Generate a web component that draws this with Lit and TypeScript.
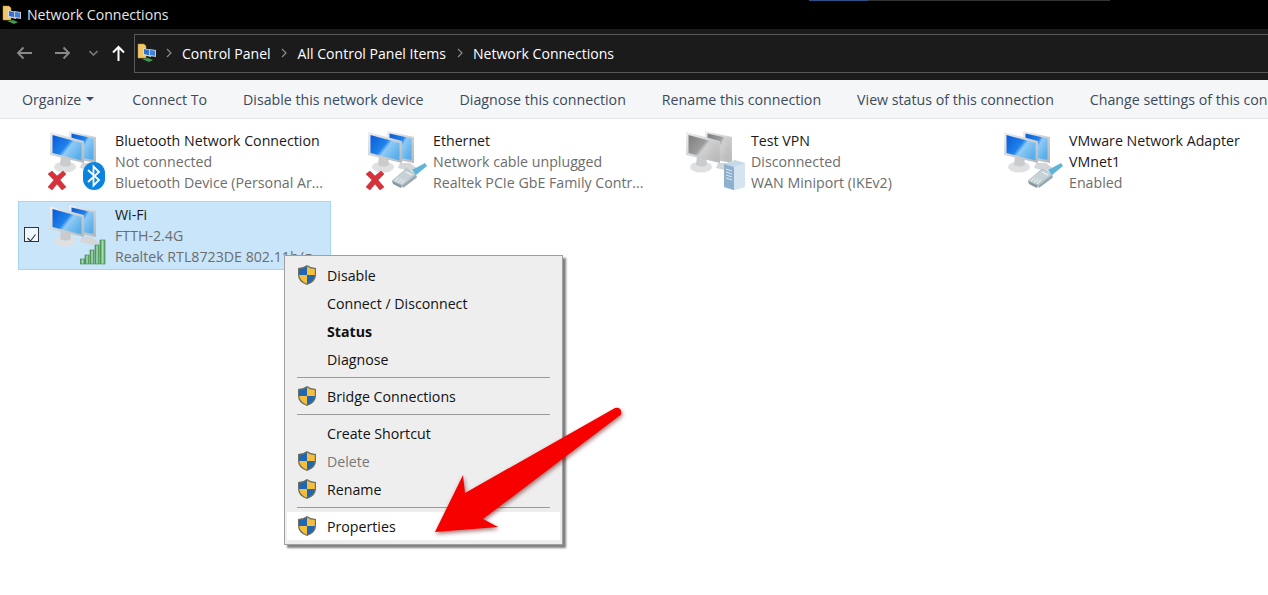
import { LitElement, html, css, svg } from "lit";
import { customElement } from "lit/decorators.js";

const monitors = (gray: boolean) => {
  const id = gray ? "g" : "b";
  return svg`
    <defs>
      <linearGradient id="scr-${id}" x1="0" y1="0" x2="1" y2=".7">
        <stop offset="0" stop-color="${gray ? "#7d7d7d" : "#0a5ad6"}"/>
        <stop offset=".5" stop-color="${gray ? "#9c9c9c" : "#1f82ea"}"/>
        <stop offset=".62" stop-color="${gray ? "#d0d0d0" : "#8fcaf4"}"/>
        <stop offset="1" stop-color="${gray ? "#bdbdbd" : "#5aaeea"}"/>
      </linearGradient>
      <linearGradient id="frm-${id}" x1="0" y1="0" x2="1" y2="1">
        <stop offset="0" stop-color="#eceef0"/>
        <stop offset="1" stop-color="#b4b8bb"/>
      </linearGradient>
      <linearGradient id="grn" x1="0" y1="0" x2="1" y2="0">
        <stop offset="0" stop-color="#3f8f52"/>
        <stop offset=".5" stop-color="#a9dcb0"/>
        <stop offset="1" stop-color="#4f9f60"/>
      </linearGradient>
    </defs>
    <path d="M34 33l-2 5 12 3 8-2-8-6z" fill="#d4d6d7"/>
    <path d="M21 1l27 6v26l-27-5z" fill="url(#frm-${id})"/>
    <path d="M23.500 3.500l22 5v21.500l-22-4z" fill="url(#scr-${id})"/>
    <ellipse cx="17" cy="37" rx="11" ry="5.500" fill="#dfe0e1"/>
    <path d="M13 26h9l1 9q-5 3-11 0z" fill="#c9cbcd"/>
    <path d="M2 2l34 9v22L2 25z" fill="url(#frm-${id})"/>
    <path d="M4.500 5l29 8v17.500L4.500 23z" fill="url(#scr-${id})"/>
  `;
};

const redX = svg`<path d="M0 44l4-3 5 5 6-5 3 3-6 6 6 7-4 3-5-6-5 6-4-3 6-7z" fill="#d8313a" stroke="#b02a30" stroke-width=".5"/>`;

const bluetooth = svg`
  <rect x="35" y="32" width="22" height="28" rx="11" fill="#0a84e0"/>
  <path d="M40 40l11 10-5.500 5.500V36.500L51 42 40 52" fill="none" stroke="#fff" stroke-width="1.800"/>`;

const plug = svg`
  <path d="M46 40l13-7 2 3-11 9z" fill="#5fb4d8"/>
  <path d="M26 51l14-12 10 5-14 11z" fill="#c6d2d7" stroke="#8fa0a8" stroke-width=".5"/>
  <path d="M26 51l10 4.500-1 2.500-8-4z" fill="#84959d"/>
  <path d="M36 55.500l14-11 1 3-14 10.500z" fill="#98a9b1"/>
  <path d="M29 51l4-3.500M32 52.500l4-3.500M35 53.500l4-3.500" stroke="#eef3f5" stroke-width="1" fill="none"/>
  <path d="M40 42l6 3" stroke="#eef3f5" stroke-width="1.200" fill="none"/>`;

const server = svg`
  <path d="M40 34l11-4 10 3v24l-11 3-10-3z" fill="#c6d9e9"/>
  <path d="M40 34l10 3v23l-10-3z" fill="#8db0cf"/>
  <path d="M50 37l11-4v24l-11 3z" fill="#d5e4f0"/>
  <path d="M42 39l6 2M42 42l6 2M42 45l6 2M42 48l6 2" stroke="#e4edf4" stroke-width=".9"/>`;

const bars = svg`
  <g fill="url(#grn)" stroke="#3e7d4b" stroke-width=".6">
    <rect x="32.500" y="55" width="4" height="5"/>
    <rect x="37" y="51" width="4" height="9"/>
    <rect x="42" y="46" width="4" height="14"/>
    <rect x="47" y="41" width="4" height="19"/>
    <rect x="52" y="36" width="5" height="24"/>
  </g>`;

const netIcon = (badges: unknown[], gray = false) => html`
  <svg class="net" viewBox="0 0 62 62" width="62" height="62">
    ${monitors(gray)}${badges}
  </svg>`;

const smallIcon = html`
  <svg viewBox="0 0 20 20" width="20" height="20">
    <path d="M1 1h6l2 2v12H1z" fill="#f0c766" stroke="#b8923c" stroke-width=".5"/>
    <path d="M6 5l8 2v7l-8-2z" fill="#d9dde2"/>
    <path d="M7 6l6 1.500v5L7 11z" fill="#2f6fd0"/>
    <path d="M12 6l7 1v7l-7-1z" fill="#c6cbd2"/>
    <path d="M13 7l5 .7v5L13 12z" fill="#3c7fdc"/>
    <path d="M5 16l6-1 5 2-4 2z" fill="#3f9b4e"/>
  </svg>`;

const shield = html`
  <svg class="shield" viewBox="0 0 20 22" width="20" height="22">
    <path d="M10 1q4 3 9 3v7q0 7-9 10Q1 18 1 11V4q5 0 9-3z" fill="#6f6f5f"/>
    <path d="M10 2.500V11H2.200V5Q6.500 5 10 2.500z" fill="#1f66b4"/>
    <path d="M10 2.500Q13.500 5 17.800 5v6H10z" fill="#f5bf3c"/>
    <path d="M2.200 11H10v8.700Q3 17 2.200 11z" fill="#f5bf3c"/>
    <path d="M10 11h7.800Q17 17 10 19.700z" fill="#1f66b4"/>
  </svg>`;

const chevron = html`<svg width="6" height="10" viewBox="0 0 6 10" fill="none" stroke="#8a8a8a" stroke-width="1.200"><path d="M1 1l4 4-4 4"/></svg>`;

const connections = [
  { name: ["Bluetooth Network Connection"], sub: ["Not connected", "Bluetooth Device (Personal Ar..."], icon: netIcon([redX, bluetooth]) },
  { name: ["Ethernet"], sub: ["Network cable unplugged", "Realtek PCIe GbE Family Contr..."], icon: netIcon([redX, plug]) },
  { name: ["Test VPN"], sub: ["Disconnected", "WAN Miniport (IKEv2)"], icon: netIcon([server], true) },
  { name: ["VMware Network Adapter", "VMnet1"], sub: ["Enabled"], icon: netIcon([plug]) },
  { name: ["Wi-Fi"], sub: ["FTTH-2.4G", "Realtek RTL8723DE 802.11b/g..."], icon: netIcon([bars]), selected: true },
];

const toolbar = [
  "Connect To",
  "Disable this network device",
  "Diagnose this connection",
  "Rename this connection",
  "View status of this connection",
  "Change settings of this connection",
];

type MenuRow = { t?: string; shield?: boolean; bold?: boolean; dim?: boolean; hot?: boolean; sep?: boolean };
const menu: MenuRow[] = [
  { t: "Disable", shield: true },
  { t: "Connect / Disconnect" },
  { t: "Status", bold: true },
  { t: "Diagnose" },
  { sep: true },
  { t: "Bridge Connections", shield: true },
  { sep: true },
  { t: "Create Shortcut" },
  { t: "Delete", shield: true, dim: true },
  { t: "Rename", shield: true },
  { sep: true },
  { t: "Properties", shield: true, hot: true },
];

@customElement("app-root")
export class AppRoot extends LitElement {
  static styles = css`
    :host {
      display: block;
      position: relative;
      width: 1268px;
      height: 595px;
      overflow: hidden;
      background: #fff;
      font-family: "Open Sans", "Noto Sans", sans-serif;
      font-size: 14.2px;
    }
    .title {
      position: relative;
      height: 29px;
      background: #000;
      color: #e6e6e6;
      display: flex;
      align-items: center;
      gap: 5px;
      padding-left: 2px;
      font-size: 14.1px;
    }
    .strip {
      position: absolute;
      left: 809px;
      top: 0;
      width: 301px;
      height: 1px;
      background: linear-gradient(90deg, #2c4f86 0 59px, #333 59px);
    }
    .nav {
      height: 51px;
      background: #1b1b1b;
      display: flex;
      align-items: center;
      padding: 5px 0 8px 16px;
      box-sizing: border-box;
      color: #fff;
    }
    .nav svg { flex: none; }
    .arrows { display: flex; align-items: center; width: 118px; }
    .a1 { margin-right: 23px; }
    .a2 { margin-right: 18px; }
    .a3 { margin-right: 14px; }
    .addr {
      flex: 1;
      height: 39px;
      box-sizing: border-box;
      border: 1px solid #595959;
      border-right: 0;
      display: flex;
      align-items: center;
      padding-left: 2px;
      gap: 10.5px;
      font-size: 14.05px;
    }
    .addr .ico { margin-right: -2px; display: flex; }
    .tools {
      height: 39px;
      box-sizing: border-box;
      background: #f5f6f7;
      border-bottom: 1px solid #e6e6e6;
      display: flex;
      align-items: center;
      gap: 36px;
      padding-left: 22px;
      color: #3b4a5c;
      white-space: nowrap;
    }
    .org { display: flex; align-items: center; gap: 5px; margin-right: 2px; }
    .caret {
      width: 0;
      height: 0;
      border: 4px solid transparent;
      border-top: 4px solid #3b4a5c;
      border-bottom: 0;
    }
    .grid {
      display: grid;
      grid-template-columns: repeat(4, 313px);
      grid-auto-rows: 69px;
      gap: 5px;
      padding: 8px 0 0 18px;
    }
    .item {
      position: relative;
      display: flex;
      box-sizing: border-box;
      padding: 2px 0 0 29px;
      border: 1px solid transparent;
      white-space: nowrap;
      line-height: 21px;
      color: #1a1a1a;
    }
    .item.sel { background: #c8e5f9; border-color: #a5d5f0; }
    .net {
      flex: none;
      width: 62px;
      height: 62px;
      margin-right: 5px;
      filter: blur(0.3px);
    }
    .lines { min-width: 0; }
    .sub { color: #6d6d6d; }
    .check {
      position: absolute;
      left: 5px;
      top: 25px;
      width: 15px;
      height: 15px;
      box-sizing: border-box;
      border: 1px solid #333;
      background: #eef7fd;
    }
    .menu {
      position: absolute;
      left: 284px;
      top: 255px;
      width: 279px;
      height: 290px;
      box-sizing: border-box;
      border: 1px solid #a0a0a0;
      background: #eeeeee;
      padding: 5px 2px 4px;
      box-shadow: 3px 3px 2px rgba(0, 0, 0, 0.5);
      color: #111;
    }
    .row {
      height: 28px;
      display: flex;
      align-items: center;
      gap: 10px;
      padding-left: 10px;
    }
    .row.noicon { padding-left: 40px; }
    .row.bold { font-weight: 700; }
    .row.dim { color: #777; }
    .row.hot { background: #fff; }
    .shield { flex: none; }
    .sep { height: 9px; display: flex; align-items: center; padding: 0 10px; }
    .sep i { display: block; flex: 1; height: 1px; background: #9a9a9a; }
    .arrow {
      position: absolute;
      left: 425px;
      top: 400px;
      filter: drop-shadow(1px 2px 2px rgba(90, 0, 0, 0.55));
    }
  `;

  render() {
    return html`
      <div class="title">${smallIcon}<span>Network Connections</span><div class="strip"></div></div>
      <div class="nav">
        <div class="arrows">
          <svg class="a1" width="16" height="14" viewBox="0 0 16 14" fill="none" stroke="#8a8a8a" stroke-width="1.800"><path d="M16 7H2M7.500 1.500L2 7l5.500 5.500"/></svg>
          <svg class="a2" width="16" height="14" viewBox="0 0 16 14" fill="none" stroke="#8a8a8a" stroke-width="1.800"><path d="M0 7h14M8.500 1.500L14 7l-5.500 5.500"/></svg>
          <svg class="a3" width="9" height="6" viewBox="0 0 9 6" fill="none" stroke="#777" stroke-width="1.600"><path d="M.5 1L4.500 5l4-4"/></svg>
          <svg width="13" height="16" viewBox="0 0 13 16" fill="none" stroke="#fff" stroke-width="2"><path d="M6.500 16V2M1 7.500L6.500 2 12 7.500"/></svg>
        </div>
        <div class="addr">
          <span class="ico">${smallIcon}</span>
          ${chevron}
          <span>Control Panel</span>
          ${chevron}
          <span>All Control Panel Items</span>
          ${chevron}
          <span>Network Connections</span>
        </div>
      </div>
      <div class="tools">
        <span class="org">Organize<i class="caret"></i></span>
        ${toolbar.map((t) => html`<span>${t}</span>`)}
      </div>
      <div class="grid">
        ${connections.map(
          (c) => html`
            <div class="item ${c.selected ? "sel" : ""}">
              ${c.selected
                ? html`<div class="check"><svg width="13" height="13" viewBox="0 0 13 13" fill="none" stroke="#333" stroke-width="1.100"><path d="M2.500 7l3 3 5-6.500"/></svg></div>`
                : ""}
              ${c.icon}
              <div class="lines">
                ${c.name.map((n) => html`<div>${n}</div>`)}
                ${c.sub.map((s) => html`<div class="sub">${s}</div>`)}
              </div>
            </div>`
        )}
      </div>
      <div class="menu">
        ${menu.map((m) =>
          m.sep
            ? html`<div class="sep"><i></i></div>`
            : html`<div class="row ${m.shield ? "" : "noicon"} ${m.bold ? "bold" : ""} ${m.dim ? "dim" : ""} ${m.hot ? "hot" : ""}">
                ${m.shield ? shield : ""}<span>${m.t}</span>
              </div>`
        )}
      </div>
      <svg class="arrow" width="205" height="140" viewBox="425 400 205 140">
        <path d="M615 408q5-1 6 3t-2 5L483 519l15 8-63 5 28-57 2 18z" fill="#f60000"/>
      </svg>
    `;
  }
}
